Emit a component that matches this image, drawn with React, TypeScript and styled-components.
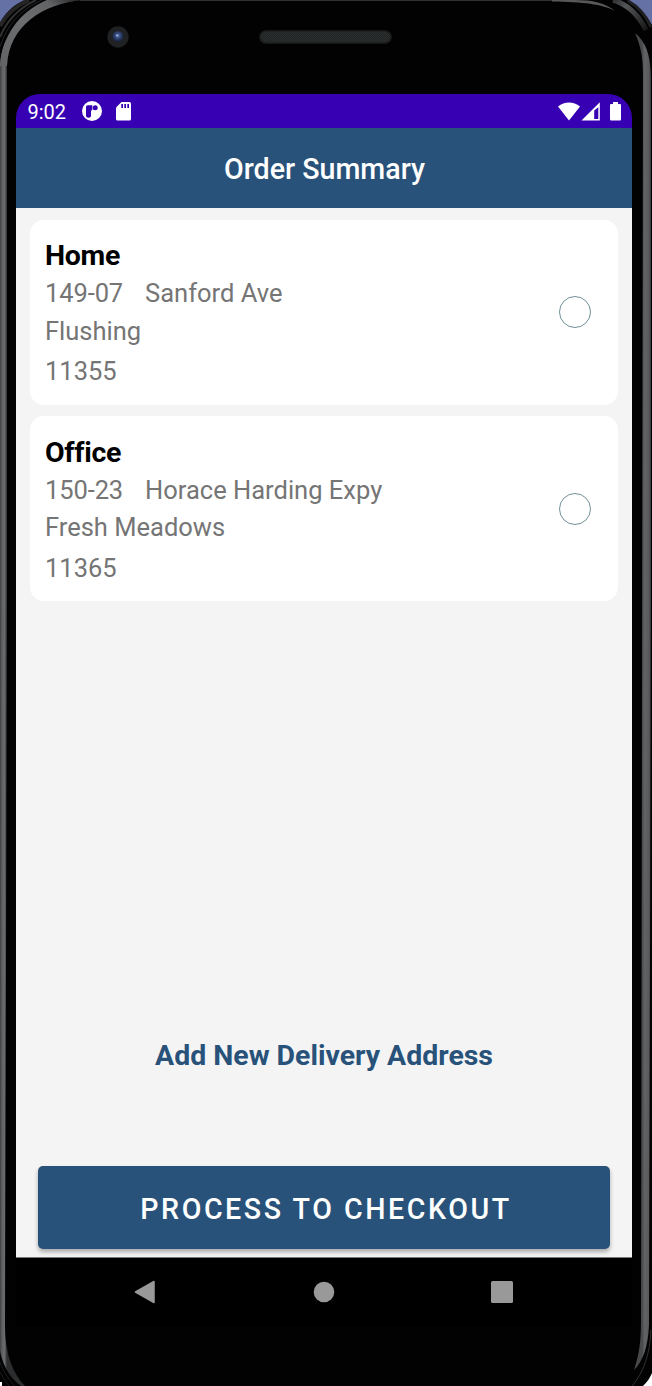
import React from 'react';
import styled, { createGlobalStyle } from 'styled-components';

const GlobalStyle = createGlobalStyle`
  *, *::before, *::after { box-sizing: border-box; }
  body { margin: 0; background: #fff; font-family: Roboto, "Liberation Sans", sans-serif; }
`;

const Stage = styled.main`
  position: relative;
  width: 652px;
  height: 1386px;
  overflow: hidden;
  padding: 94px 20px 60px 16px;
`;

const Bezel = styled.svg`
  position: absolute;
  inset: 0;
  z-index: -1;
`;

const Screen = styled.div`
  display: flex;
  flex-direction: column;
  width: 616px;
  height: 1232px;
  border-radius: 24px 24px 0 0;
  overflow: hidden;
  background: linear-gradient(#3700b3 34px, #f4f4f4 34px);
`;

const StatusBar = styled.div`
  flex: none;
  display: flex;
  align-items: center;
  height: 34px;
  padding: 0 11px;
  color: #fff;
`;

const Clock = styled.span`
  width: 55px;
  font-size: 20px;
  line-height: 34px;
  padding: 2px 0 0 0.5px;
`;

const StatusIcon = styled.svg<{ $gap?: number }>`
  flex: none;
  display: block;
  margin-left: ${(p) => p.$gap ?? 0}px;
`;

const StatusRight = styled.div`
  display: flex;
  align-items: center;
  margin-left: auto;
`;

const AppBar = styled.header`
  flex: none;
  height: 80px;
  background: #28527a;
  color: #fff;
  text-align: center;
`;

const Title = styled.h1`
  margin: 0;
  padding-left: 1px;
  font-size: 28.6px;
  line-height: 82px;
  font-weight: 500;
`;

const Content = styled.div`
  flex: 1;
  min-height: 0;
  display: flex;
  flex-direction: column;
  padding: 11.5px 14px 8px;
`;

const AddressList = styled.div`
  display: flex;
  flex-direction: column;
  gap: 11.2px;
`;

const Card = styled.article`
  display: flex;
  align-items: center;
  justify-content: space-between;
  height: 185.3px;
  padding: 0 27px 0 15px;
  border-radius: 14px;
  background: #fff;
`;

const Address = styled.div`
  padding-top: 5px;
`;

const AddressName = styled.h2`
  margin: 0;
  font-size: 28.5px;
  line-height: 38px;
  font-weight: 700;
  letter-spacing: -0.3px;
  color: #000;
`;

const AddressLine = styled.div<{ $height?: number }>`
  display: flex;
  gap: 22px;
  font-size: 25.5px;
  line-height: ${(p) => p.$height ?? 37.5}px;
  color: #757575;
`;

const StreetNumber = styled.span`
  letter-spacing: -0.1px;
`;

const Radio = styled.button`
  width: 32px;
  height: 32px;
  padding: 0;
  border: 1px solid #72909a;
  border-radius: 50%;
  background: #fff;
`;

const AddAddress = styled.button`
  margin: auto 0 88px;
  padding: 0;
  border: 0;
  background: none;
  color: #28527a;
  font: 700 28.45px/44px Roboto, sans-serif;
`;

const Checkout = styled.button`
  flex: none;
  height: 83px;
  margin: 0 8px;
  padding: 2px 0 0 4px;
  border: 0;
  border-radius: 5px;
  background: #28527a;
  box-shadow: 0 3px 4px rgba(0, 0, 0, 0.3);
  color: #fff;
  font: 500 28.6px/40px Roboto, sans-serif;
  letter-spacing: 2.55px;
`;

const NavBar = styled.nav`
  flex: none;
  display: grid;
  grid-template-columns: repeat(3, 178px);
  justify-content: center;
  align-items: center;
  justify-items: center;
  height: 69px;
  border-top: 1px solid #777;
  background: #000;
`;

const addresses = [
  { name: 'Home', number: '149-07', street: 'Sanford Ave', city: 'Flushing', zip: '11355' },
  { name: 'Office', number: '150-23', street: 'Horace Harding Expy', city: 'Fresh Meadows', zip: '11365' },
];

function DeviceBezel() {
  return (
    <Bezel width="652" height="1386" viewBox="0 0 652 1386" fill="none" aria-hidden="true">
      <defs>
        <linearGradient id="leftRail" x1="0" x2="7" gradientUnits="userSpaceOnUse">
          <stop offset="0" stopColor="#3e3f40" />
          <stop offset=".3" stopColor="#606163" />
          <stop offset=".65" stopColor="#6a6b6d" />
          <stop offset="1" stopColor="#2c2d2e" />
        </linearGradient>
        <linearGradient id="topShine" x1="5" y1="90" x2="82" y2="0" gradientUnits="userSpaceOnUse">
          <stop offset="0" stopColor="#606163" />
          <stop offset=".55" stopColor="#6c6d6f" />
          <stop offset=".8" stopColor="#626365" />
          <stop offset="1" stopColor="#202021" />
        </linearGradient>
        <linearGradient id="rightRail" x1="642" x2="651" gradientUnits="userSpaceOnUse">
          <stop offset="0" stopColor="#48494b" />
          <stop offset=".3" stopColor="#626365" />
          <stop offset=".8" stopColor="#58595b" />
          <stop offset="1" stopColor="#303132" />
        </linearGradient>
        <linearGradient id="rim" x1="609" y1="0" x2="646" y2="32" gradientUnits="userSpaceOnUse">
          <stop offset="0" stopColor="#28292a" />
          <stop offset=".35" stopColor="#555658" />
          <stop offset="1" stopColor="#151516" />
        </linearGradient>
        <pattern id="mesh" width="2" height="2" patternUnits="userSpaceOnUse">
          <rect width="2" height="2" fill="#202222" />
          <rect width="1" height="1" fill="#303333" />
          <rect x="1" y="1" width="1" height="1" fill="#2b2e2e" />
        </pattern>
        <radialGradient id="lens" cx=".48" cy=".42" r=".55">
          <stop offset="0" stopColor="#7087bd" />
          <stop offset=".4" stopColor="#344a7c" />
          <stop offset="1" stopColor="#182039" />
        </radialGradient>
      </defs>
      <path d="M0 0H28V30H0ZM622 0H652V34H622Z" fill="#6570a4" />
      <path d="M0 23C5 13 13 5 25 0H627C638 5 646 14 652 25V1373C650 1378 647 1382 643 1386H2V1382H0Z" fill="#020202" />
      <path d="M0 26C6 15 15 6 29 0" stroke="#252525" strokeWidth="4" />
      <path d="M0 37C7 20 19 8 36 0" stroke="#303132" strokeWidth="2" />
      <path d="M0 47C7 25 20 10 42 0" stroke="#242526" />
      <path d="M0 64C2 38 18 12 47 0H82C43 4 9 25 7 66V600L5 1326C5 1354 13 1374 25 1386H21C8 1377 2 1362 0 1351Z" fill="url(#leftRail)" />
      <path d="M0 66C2 38 18 12 47 0H82C43 4 9 25 7 66Z" fill="url(#topShine)" />
      <path d="M0 1362C3 1371 8 1379 15 1386M0 1372C3 1378 6 1382 9 1386" stroke="#1d1e1e" />
      <path d="M80 .5H568" stroke="#303030" />
      <path d="M552 0H575C592 0 606 3 615 11C602 4 583 2 552 1.5Z" fill="#57585a" />
      <path d="M613 0C627 4 638 14 646 30" stroke="url(#rim)" strokeWidth="5" />
      <path d="M628 1C639 7 646 16 651 27" stroke="#202122" strokeWidth="3" />
      <path d="M635 33C646 42 650 54 651 75V600L649 1325C648 1347 643 1361 634 1370C639 1355 641 1343 641 1320L643 75C643 57 641 47 635 33Z" fill="url(#rightRail)" />
      <path d="M651 1330C650 1353 644 1372 632 1386" stroke="#303132" />
      <rect x="259" y="30" width="133" height="14" rx="7" fill="#151616" />
      <rect x="260.5" y="31.5" width="130" height="11" rx="5.5" fill="url(#mesh)" stroke="#202121" />
      <circle cx="118" cy="37" r="10.7" fill="#202123" />
      <circle cx="118" cy="36.5" r="5.5" fill="url(#lens)" />
      <circle cx="117" cy="35.5" r="1" fill="#a4b7df" />
    </Bezel>
  );
}

export default function App() {
  return (
    <>
      <GlobalStyle />
      <Stage>
        <DeviceBezel />
        <Screen>
          <StatusBar>
            <Clock>9:02</Clock>
            <StatusIcon width="20" height="20" viewBox="0 0 20 20">
              <circle cx="10" cy="10" r="10" fill="#fff" />
              <path d="M4 6Q4 4.3 5.7 4.3H9V14.2A2.5 2.5 0 0 1 4 14.2Z" fill="#3700b3" />
              <circle cx="13.2" cy="6.7" r="2.5" fill="#3700b3" />
              <path d="M9 4.3H10.3V8.5L9 10Z" fill="#3700b3" />
            </StatusIcon>
            <StatusIcon $gap={14} width="15" height="19" viewBox="0 0 15 19">
              <path d="M5.5 0H13.5Q15 0 15 1.5V17Q15 18.5 13.5 18.5H1.5Q0 18.5 0 17V5.5Z" fill="#fff" />
              <path d="M5.3 2H7V6H5.3ZM8.3 2H10V6H8.3ZM11.3 2H13V6H11.3Z" fill="#3700b3" />
            </StatusIcon>
            <StatusRight>
              <StatusIcon width="22" height="19" viewBox="0 0 22 19">
                <path d="M0 4.5C6.5-1 15.5-1 22 4.5L11 18.5Z" fill="#fff" />
              </StatusIcon>
              <StatusIcon $gap={1} width="19" height="19" viewBox="0 0 19 19">
                <path d="M18.8 .3V18.5H0.5Z" fill="#fff" />
                <path d="M17.3 5.2V17H13.2V8.5Z" fill="#3700b3" />
                <path d="M14.5 9.5L16 8V15.8H14.5Z" fill="#3700b3" />
              </StatusIcon>
              <StatusIcon $gap={10} width="11" height="19" viewBox="0 0 11 19">
                <path d="M3 0H8V2H10Q11 2 11 3V17Q11 18.5 10 18.5H1Q0 18.5 0 17V3Q0 2 1 2H3Z" fill="#fff" />
              </StatusIcon>
            </StatusRight>
          </StatusBar>
          <AppBar>
            <Title>Order Summary</Title>
          </AppBar>
          <Content>
            <AddressList>
              {addresses.map((a) => (
                <Card key={a.name}>
                  <Address>
                    <AddressName>{a.name}</AddressName>
                    <AddressLine>
                      <StreetNumber>{a.number}</StreetNumber>
                      <span>{a.street}</span>
                    </AddressLine>
                    <AddressLine>{a.city}</AddressLine>
                    <AddressLine $height={42}>{a.zip}</AddressLine>
                  </Address>
                  <Radio aria-label={a.name} />
                </Card>
              ))}
            </AddressList>
            <AddAddress>Add New Delivery Address</AddAddress>
            <Checkout>PROCESS TO CHECKOUT</Checkout>
          </Content>
          <NavBar>
            <svg width="24" height="24" viewBox="0 0 24 24">
              <path d="M20 1.5V22.5L1.5 12Z" fill="#999" stroke="#999" strokeWidth="1.5" strokeLinejoin="round" />
            </svg>
            <svg width="22" height="22" viewBox="0 0 22 22">
              <circle cx="11" cy="11" r="10.3" fill="#999" />
            </svg>
            <svg width="22" height="22" viewBox="0 0 22 22">
              <rect width="22" height="22" rx="1.5" fill="#999" />
            </svg>
          </NavBar>
        </Screen>
      </Stage>
    </>
  );
}
